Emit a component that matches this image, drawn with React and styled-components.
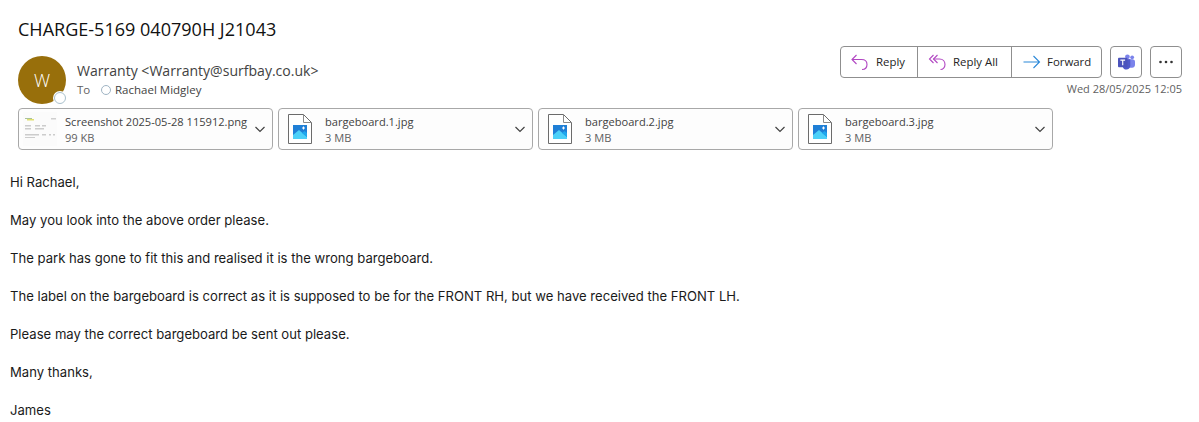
import React from 'react'
import styled, { createGlobalStyle } from 'styled-components'

const GlobalStyle = createGlobalStyle`
	html, body {
		margin: 0;
		background: #fff;
		font-family: "Open Sans", "Noto Sans", sans-serif;
	}
`

const Page = styled.div`
	width: 1199px;
	height: 422px;
	overflow: hidden;
	box-sizing: border-box;
	padding-top: 18px;
`

const Subject = styled.h1`
	margin: 0 0 0 18px;
	height: 22px;
	line-height: 22px;
	font-size: 18.05px;
	font-weight: 400;
	color: #111;
`

const HeaderRow = styled.div`
	display: flex;
	justify-content: space-between;
	margin-top: 6px;
	padding: 0 17px 0 18px;
	height: 62px;
`

const Sender = styled.div`
	display: flex;
	padding-top: 10px;
`

const Avatar = styled.div`
	position: relative;
	width: 48px;
	height: 48px;
	border-radius: 50%;
	background: #986f0b;
	color: #fff;
	font-size: 18px;
	font-weight: 300;
	display: flex;
	align-items: center;
	justify-content: center;
	flex-shrink: 0;
`

const Presence = styled.span`
	position: absolute;
	right: 0;
	bottom: 0;
	width: 10px;
	height: 10px;
	border-radius: 50%;
	background: #fff;
	border: 1.5px solid #a9c0cc;
	box-shadow: 0 0 0 1px #fff;
`

const SenderText = styled.div`
	margin-left: 11px;
	padding-top: 5px;
`

const SenderName = styled.div`
	font-size: 14.05px;
	line-height: 20px;
	color: #424242;
`

const Recipients = styled.div`
	display: flex;
	align-items: center;
	margin-top: 1px;
	font-size: 11.5px;
	line-height: 16px;
	color: #424242;
`

const ToLabel = styled.span`
	color: #616161;
	width: 24px;
`

const RecipientDot = styled.span`
	width: 8px;
	height: 8px;
	border-radius: 50%;
	border: 1px solid #9fb4c4;
	margin-right: 4px;
`

const Actions = styled.div`
	display: flex;
	flex-direction: column;
	align-items: flex-end;
`

const ButtonRow = styled.div`
	display: flex;
	gap: 8px;
`

const ButtonGroup = styled.div`
	display: flex;
	height: 32px;
	box-sizing: border-box;
	border: 1px solid #8f8f8f;
	border-radius: 4px;
`

const ActionButton = styled.div`
	width: ${({ $width }) => $width}px;
	box-sizing: border-box;
	display: flex;
	align-items: center;
	gap: ${({ $gap }) => $gap}px;
	padding-left: ${({ $pad }) => $pad}px;
	font-size: 11.4px;
	color: #242424;
	& + & {
		border-left: 1px solid #8f8f8f;
	}
`

const ButtonLabel = styled.span`
	margin-top: -2px;
`

const IconButton = styled.div`
	width: 32px;
	height: 32px;
	box-sizing: border-box;
	border: 1px solid #8f8f8f;
	border-radius: 4px;
	display: flex;
	align-items: center;
	justify-content: center;
`

const DateText = styled.div`
	margin-top: 3px;
	font-size: 11px;
	line-height: 16px;
	color: #616161;
`

const Attachments = styled.div`
	display: flex;
	gap: 5px;
	margin: 0 0 0 18px;
`

const Attachment = styled.div`
	width: 255px;
	height: 42px;
	box-sizing: border-box;
	border: 1px solid #a8a8a8;
	border-radius: 4px;
	background: #fdfdfd;
	display: flex;
	align-items: center;
	padding: 0 6px 0 ${({ $thumb }) => ($thumb ? 4 : 9)}px;
`

const FileMeta = styled.div`
	flex: 1;
	margin-left: ${({ $thumb }) => ($thumb ? 8 : 13)}px;
	padding-top: 1px;
	font-size: 11.1px;
	line-height: 16px;
	color: #424242;
`

const FileSize = styled.div`
	color: #616161;
`

const Body = styled.div`
	margin: 23px 0 0 10px;
	font-family: "Inter", "Open Sans", sans-serif;
	font-size: 13.1px;
	color: #1a1a1a;
`

const Paragraph = styled.p`
	margin: 0 0 19px;
	height: 19px;
	line-height: 19px;
`

const Chevron = () => (
	<svg width="12" height="12" viewBox="0 0 12 12" fill="none">
		<path d="M1.500 4L6 8.500L10.500 4" stroke="#424242" strokeWidth="1.2" />
	</svg>
)

const ScreenshotThumb = () => (
	<svg width="34" height="34" viewBox="0 0 34 34">
		<rect width="34" height="34" fill="#fbfbfb" />
		<rect x="2" y="6" width="7" height="1" fill="#a9c29a" />
		<rect x="4" y="7" width="7" height="1.500" fill="#e0e070" />
		<rect x="28" y="6" width="5" height="1.500" fill="#cfcfcf" />
		<g fill="#cccccc">
			<rect x="2" y="13" width="6" height="1.500" />
			<rect x="12" y="13" width="5" height="1.500" />
			<rect x="19" y="13" width="4" height="1.500" />
			<rect x="2" y="16" width="6" height="1.500" />
			<rect x="12" y="16" width="9" height="1.500" />
			<rect x="2" y="22" width="14" height="1.500" />
			<rect x="19" y="22" width="4" height="1.500" />
			<rect x="26" y="22" width="2" height="1.500" />
			<rect x="30" y="22" width="2" height="1.500" />
			<rect x="2" y="25" width="10" height="1" />
		</g>
	</svg>
)

const ImageFileIcon = () => (
	<svg width="24" height="30" viewBox="0 0 24 30" fill="none">
		<path d="M.5.5H15.500L23.500 8.500V29.500H.5Z" fill="#fff" stroke="#6b6b6b" />
		<path d="M15.500.5V8.500H23.500" stroke="#8a8a8a" />
		<rect x="5" y="11" width="14" height="14" fill="#1f7fd6" />
		<path d="M5 21L11 16L19 23V25H5Z" fill="#4cd0f8" />
		<path d="M14 19L16.500 17L19 19V23Z" fill="#1ea7ee" />
		<path d="M15.500 12.500V15.500M14 14H17" stroke="#fff" strokeWidth="1" />
	</svg>
)

const ReplyIcon = () => (
	<svg width="20" height="18" viewBox="0 0 20 18" fill="none" stroke="#b146c2" strokeWidth="1.1">
		<path d="M6.500 2L2 6.500L6.500 11" />
		<path d="M2 6.500H11.500C15 6.500 17 8.500 17 11.500C17 14.500 15 16.500 12 16.500" />
	</svg>
)

const ReplyAllIcon = () => (
	<svg width="20" height="18" viewBox="0 0 20 18" fill="none" stroke="#b146c2" strokeWidth="1.1">
		<path d="M5.500 2L1.500 6L5.500 10" />
		<path d="M9.500 2L5.500 6L9.500 10" />
		<path d="M5.500 6H11.500C15 6 17 8.500 17 11.500C17 14.500 15 16.500 12.500 16.500" />
	</svg>
)

const ForwardIcon = () => (
	<svg width="18" height="14" viewBox="0 0 18 14" fill="none" stroke="#2b88d8" strokeWidth="1.1">
		<path d="M.5 7H16.500M10.500 1L16.500 7L10.500 13" />
	</svg>
)

const TeamsIcon = () => (
	<svg width="17" height="16" viewBox="0 0 18 16">
		<circle cx="15" cy="3" r="2" fill="#7b83eb" />
		<circle cx="10" cy="2.500" r="2.500" fill="#7b83eb" />
		<rect x="6" y="5" width="12" height="9" rx="3" fill="#7b83eb" />
		<path d="M7 5H13V12C13 14.500 11 16 9 16C7 16 5.500 15 5 13V7Z" fill="#5059c9" />
		<rect x="0" y="3.500" width="10" height="10" rx="1" fill="#4b53bc" />
		<path d="M2.500 6H7.500M5 6V11.500" stroke="#fff" strokeWidth="1.2" />
	</svg>
)

const MoreIcon = () => (
	<svg width="16" height="4" viewBox="0 0 16 4" fill="#333">
		<circle cx="2.500" cy="2" r="1.300" />
		<circle cx="8" cy="2" r="1.300" />
		<circle cx="13.500" cy="2" r="1.300" />
	</svg>
)

const files = [
	{ name: 'Screenshot 2025-05-28 115912.png', size: '99 KB', thumb: true },
	{ name: 'bargeboard.1.jpg', size: '3 MB' },
	{ name: 'bargeboard.2.jpg', size: '3 MB' },
	{ name: 'bargeboard.3.jpg', size: '3 MB' },
]

const lines = [
	'Hi Rachael,',
	'May you look into the above order please.',
	'The park has gone to fit this and realised it is the wrong bargeboard.',
	'The label on the bargeboard is correct as it is supposed to be for the FRONT RH, but we have received the FRONT LH.',
	'Please may the correct bargeboard be sent out please.',
	'Many thanks,',
	'James',
]

export default function App() {
	return (
		<Page>
			<GlobalStyle />
			<Subject>CHARGE-5169 040790H J21043</Subject>
			<HeaderRow>
				<Sender>
					<Avatar>
						W
						<Presence />
					</Avatar>
					<SenderText>
						<SenderName>Warranty &lt;Warranty@surfbay.co.uk&gt;</SenderName>
						<Recipients>
							<ToLabel>To</ToLabel>
							<RecipientDot />
							Rachael Midgley
						</Recipients>
					</SenderText>
				</Sender>
				<Actions>
					<ButtonRow>
						<ButtonGroup>
							<ActionButton $width={76} $pad={9} $gap={6}>
								<ReplyIcon />
								<ButtonLabel>Reply</ButtonLabel>
							</ActionButton>
							<ActionButton $width={94} $pad={10} $gap={5}>
								<ReplyAllIcon />
								<ButtonLabel>Reply All</ButtonLabel>
							</ActionButton>
							<ActionButton $width={90} $pad={11} $gap={6}>
								<ForwardIcon />
								<ButtonLabel>Forward</ButtonLabel>
							</ActionButton>
						</ButtonGroup>
						<IconButton>
							<TeamsIcon />
						</IconButton>
						<IconButton>
							<MoreIcon />
						</IconButton>
					</ButtonRow>
					<DateText>Wed 28/05/2025 12:05</DateText>
				</Actions>
			</HeaderRow>
			<Attachments>
				{files.map((file) => (
					<Attachment key={file.name} $thumb={file.thumb}>
						{file.thumb ? <ScreenshotThumb /> : <ImageFileIcon />}
						<FileMeta $thumb={file.thumb}>
							<div>{file.name}</div>
							<FileSize>{file.size}</FileSize>
						</FileMeta>
						<Chevron />
					</Attachment>
				))}
			</Attachments>
			<Body>
				{lines.map((line) => (
					<Paragraph key={line}>{line}</Paragraph>
				))}
			</Body>
		</Page>
	)
}
